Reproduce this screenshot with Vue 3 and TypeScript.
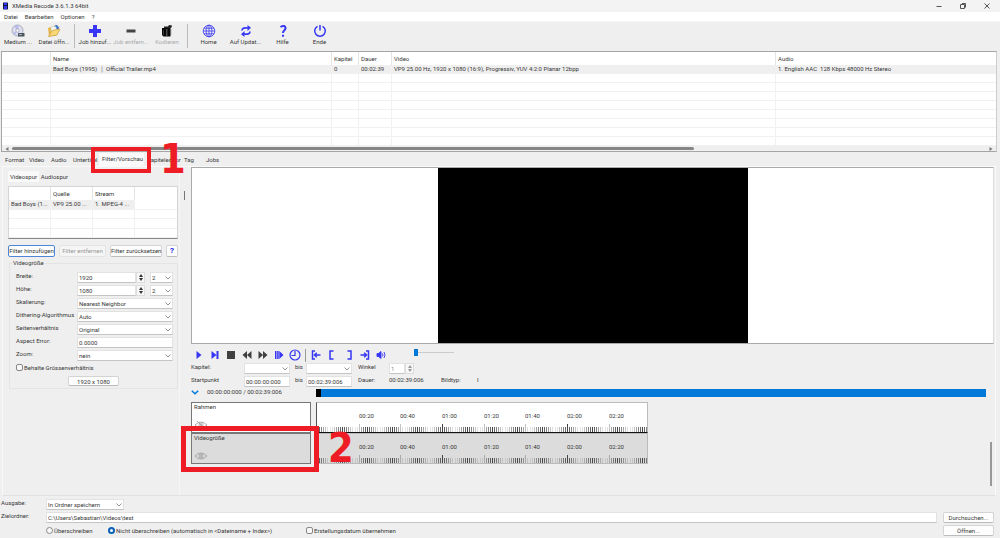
<script setup lang="ts">
import { ref } from 'vue'

interface Tool { label: string; icon: string; disabled?: boolean }

const menus: string[] = ['Datei', 'Bearbeiten', 'Optionen', '?']
const toolGroups: Tool[][] = [
  [{ label: 'Medium ...', icon: 'disc' }, { label: 'Datei öffn...', icon: 'folder' }],
  [
    { label: 'Job hinzuf...', icon: 'plus' },
    { label: 'Job entfern...', icon: 'minus', disabled: true },
    { label: 'Kodieren', icon: 'encode', disabled: true },
  ],
  [
    { label: 'Home', icon: 'globe' },
    { label: 'Auf Updat...', icon: 'update' },
    { label: 'Hilfe', icon: 'help' },
    { label: 'Ende', icon: 'power' },
  ],
]
const tabs: string[] = ['Format', 'Video', 'Audio', 'Untertitel', 'Filter/Vorschau', 'Kapiteleditor', 'Tag', 'Jobs']
const activeTab = ref('Filter/Vorschau')
const emptyRows = 8
const playerIcons: string[] = ['play', 'next', 'stop', 'rewind', 'forward', 'step', 'clock']
const markIcons: string[] = ['gostart', 'markin', 'markout', 'goend', 'sound']

const width = ref('1920')
const height = ref('1080')
const aspect = ref('0.0000')
const start = ref('00:00:00:000')
const end = ref('00:02:39:006')
const angle = ref('1')
const target = ref('C:\\Users\\Sebastian\\Videos\\test')
const overwrite = ref('no')
const volume = ref(0)
const selects = [
  { id: 'scale', label: 'Skalierung:', value: 'Nearest Neighbor' },
  { id: 'dither', label: 'Dithering-Algorithmus', value: 'Auto' },
  { id: 'ratio', label: 'Seitenverhältnis', value: 'Original' },
]

const step = 125 / 60
const ticks = Array.from({ length: 159 }, (_, i) => {
  const x = i * step
  const snapped = Math.round(x)
  return { x: snapped, major: i > 0 && i % 20 === 0, opacity: Math.max(0.14, 1 - 2 * Math.abs(x - snapped)) }
})
const marks = ['00:20', '00:40', '01:00', '01:20', '01:40', '02:00', '02:20'].map((text, i) => ({
  text,
  x: Math.round((i + 1) * step * 20),
}))
const tracks = [
  { name: 'Rahmen', hidden: true, selected: false },
  { name: 'Videogröße', hidden: false, selected: true },
]
</script>

<template>
  <div class="app">
    <header class="title">
      <svg class="logo" viewBox="0 0 6 8"><rect width="6" height="8" fill="#111" /><rect x="1" width="4" height="3" fill="#3038f0" /><rect x="1" y="4" width="4" height="4" fill="#3038f0" /></svg>
      <span class="caption">XMedia Recode 3.6.1.3 64bit</span>
      <button class="win" aria-label="Minimieren"><svg viewBox="0 0 8 8"><path d="M1.500 4.500h5" /></svg></button>
      <button class="win" aria-label="Wiederherstellen"><svg viewBox="0 0 8 8"><path d="M1.500 2.500h4v4h-4zM3 1.500h3.500v4" /></svg></button>
      <button class="win" aria-label="Schließen"><svg viewBox="0 0 8 8"><path d="M1.500 1.500l5 5m0-5l-5 5" /></svg></button>
    </header>
    <nav class="menu"><button v-for="m in menus" :key="m">{{ m }}</button></nav>

    <div class="toolbar">
      <div v-for="(group, gi) in toolGroups" :key="gi" class="group" :class="'g' + gi">
        <button v-for="t in group" :key="t.label" class="tool" :disabled="t.disabled">
          <svg viewBox="0 0 14 14">
            <template v-if="t.icon === 'disc'">
              <circle cx="6.500" cy="6.500" r="5.500" fill="#dedff0" stroke="#9a9cac" stroke-width=".8" />
              <path d="M6.500 6.500L3 2.500A5 5 0 0 1 8 1.500zM6.500 6.500L4 11a5 5 0 0 1-2-2z" fill="#b9bce8" />
              <circle cx="6.500" cy="6.500" r="1.600" fill="#fff" stroke="#8a8c9c" stroke-width=".6" />
              <rect x="7" y="9" width="6.500" height="3.500" rx=".5" fill="#4a5560" /><path d="M8 10.500h3" stroke="#cdd" stroke-width=".7" />
            </template>
            <template v-else-if="t.icon === 'folder'">
              <path d="M1 4l3-1 1 1 5-1v8l-8 1.500z" fill="#e9b848" />
              <path d="M4 3l5-2 3 3-3 5-5-1z" fill="#f7f7ee" stroke="#b8b8a0" stroke-width=".4" />
              <path d="M1.500 12.500L5 6.500l8-1.500-3 6z" fill="#f8d878" stroke="#c08d28" stroke-width=".6" />
              <path d="M7 3c2-3 4-2 4 0l1.500-.5L11 5.500 8.500 4l1-.5c0-1-1-1.500-2.500-.5z" fill="#386fc0" />
            </template>
            <path v-else-if="t.icon === 'plus'" d="M5 1h4v4h4v4H9v4H5V9H1V5h4z" fill="#3636f4" />
            <rect v-else-if="t.icon === 'minus'" x="2.500" y="5.500" width="9" height="3" fill="#444" />
            <template v-else-if="t.icon === 'encode'">
              <path d="M2 4h8.500v8.500H3.500L2 11z" fill="#080808" /><path d="M4 4V2.500h4L9 1l3 .5-.5 2-1 .5z" fill="#222" />
              <path d="M6.800 5v7" stroke="#999" stroke-width=".7" /><path d="M3.500 6v5M10.800 5v6" stroke="#555" stroke-width=".6" />
            </template>
            <g v-else-if="t.icon === 'globe'" fill="none" stroke="#4747f2" stroke-width=".9">
              <circle cx="7" cy="7" r="5.800" /><ellipse cx="7" cy="7" rx="2.900" ry="5.800" /><path d="M7 1.200v11.600M1.200 7h11.600M2 4.200h10M2 9.800h10" />
            </g>
            <g v-else-if="t.icon === 'update'" fill="none" stroke="#3636f4" stroke-width="1.700">
              <path d="M3 6.500C3 4 5.500 3.500 9 4M11 7.500c0 2.500-2.500 3-6 2.500" /><path d="M8.500 1v6L12 3.800zM5.500 7v6L2 10.200z" fill="#3636f4" stroke="none" />
            </g>
            <g v-else-if="t.icon === 'help'" fill="none" stroke="#3636f4" stroke-width="2">
              <path d="M4.500 3.200C6 1.400 10 1.500 9.500 4.500 9.200 6.300 7 6.300 7 9" /><path d="M7 10.800v2" />
            </g>
            <g v-else fill="none" stroke="#3636f4" stroke-width="1.500"><path d="M4.500 2.300a5.300 5.300 0 1 0 5 0M7 1v5.500" /></g>
          </svg>
          <span>{{ t.label }}</span>
        </button>
      </div>
    </div>

    <section class="files">
      <table class="list jobs">
        <colgroup><col class="c0" /><col class="c1" /><col class="c2" /><col class="c3" /><col class="c4" /><col /></colgroup>
        <thead><tr><th></th><th>Name</th><th>Kapitel</th><th>Dauer</th><th>Video</th><th>Audio</th></tr></thead>
        <tbody>
          <tr class="sel">
            <td></td><td>Bad Boys (1995) ｜ Official Trailer.mp4</td><td>0</td><td>00:02:39</td>
            <td>VP9 25.00 Hz, 1920 x 1080 (16:9), Progressiv, YUV 4:2:0 Planar 12bpp</td>
            <td>1. English AAC&nbsp; 128 Kbps 48000 Hz Stereo</td>
          </tr>
          <tr v-for="r in emptyRows" :key="r"><td v-for="c in 6" :key="c"></td></tr>
        </tbody>
      </table>
      <div class="hscroll">
        <svg viewBox="0 0 4 4"><path d="M3.500 0v4L.5 2z" fill="#777" /></svg>
        <div class="rail"><div class="thumb"></div></div>
        <svg viewBox="0 0 4 4"><path d="M.5 0v4l3-2z" fill="#777" /></svg>
      </div>
    </section>

    <nav class="tabs">
      <div v-for="t in tabs" :key="t" class="tabwrap" :class="{ on: t === activeTab }">
        <button class="tab" @click="activeTab = t">{{ t }}</button>
        <template v-if="t === 'Filter/Vorschau'"><span class="frame"></span><span class="digit one">1</span></template>
      </div>
    </nav>

    <main class="panel">
      <aside class="left">
        <div class="subtabs"><button class="on">Videospur</button><button>Audiospur</button></div>
        <table class="list streams">
          <colgroup><col class="s" /><col class="s" /><col class="s" /><col /></colgroup>
          <thead><tr><th></th><th>Quelle</th><th>Stream</th><th></th></tr></thead>
          <tbody>
            <tr class="sel"><td>Bad Boys (1...</td><td>VP9 25.00 ...</td><td>1. MPEG-4 ...</td><td class="clear"></td></tr>
            <tr v-for="r in 3" :key="r"><td v-for="c in 4" :key="c"></td></tr>
          </tbody>
        </table>
        <div class="actions">
          <button class="btn primary b1">Filter hinzufügen</button>
          <button class="btn b1" disabled>Filter entfernen</button>
          <button class="btn b2">Filter zurücksetzen</button>
          <button class="btn b3">?</button>
        </div>
        <fieldset class="size">
          <legend>Videogröße</legend>
          <div class="row">
            <label for="w">Breite:</label>
            <span class="spin"><input id="w" v-model="width" /><span class="ud"><button aria-label="Mehr"><svg viewBox="0 0 4 3"><path d="M0 3h4L2 0z" /></svg></button><button aria-label="Weniger"><svg viewBox="0 0 4 3"><path d="M0 0h4L2 3z" /></svg></button></span></span>
            <span class="combo mini"><select aria-label="Breite Teiler"><option>2</option></select><svg viewBox="0 0 6 4"><path d="M.5.5L3 3 5.500.5" /></svg></span>
          </div>
          <div class="row">
            <label for="h">Höhe:</label>
            <span class="spin"><input id="h" v-model="height" /><span class="ud"><button aria-label="Mehr"><svg viewBox="0 0 4 3"><path d="M0 3h4L2 0z" /></svg></button><button aria-label="Weniger"><svg viewBox="0 0 4 3"><path d="M0 0h4L2 3z" /></svg></button></span></span>
            <span class="combo mini"><select aria-label="Höhe Teiler"><option>2</option></select><svg viewBox="0 0 6 4"><path d="M.5.5L3 3 5.500.5" /></svg></span>
          </div>
          <div v-for="s in selects" :key="s.id" class="row">
            <label :for="s.id">{{ s.label }}</label>
            <span class="combo"><select :id="s.id"><option>{{ s.value }}</option></select><svg viewBox="0 0 6 4"><path d="M.5.5L3 3 5.500.5" /></svg></span>
          </div>
          <div class="row"><label for="ae">Aspect Error:</label><input id="ae" v-model="aspect" class="grow" /></div>
          <div class="row"><label for="zoom">Zoom:</label><span class="combo"><select id="zoom"><option>nein</option></select><svg viewBox="0 0 6 4"><path d="M.5.5L3 3 5.500.5" /></svg></span></div>
          <label class="check"><input type="checkbox" />Behalte Grössenverhältnis</label>
          <button class="btn res">1920 x 1080</button>
        </fieldset>
      </aside>
      <div class="splitter"></div>

      <section class="right">
        <div class="preview"><div class="screen"></div></div>
        <div class="player">
          <button v-for="p in playerIcons" :key="p" class="pi" :aria-label="p">
            <svg viewBox="0 0 12 12" fill="#3636f4">
              <path v-if="p === 'play'" d="M3.500 2v8l5-4z" />
              <path v-else-if="p === 'next'" d="M2.500 2v8l5-4zM7.500 2h2v8h-2z" />
              <rect v-else-if="p === 'stop'" x="2" y="2" width="8" height="8" fill="#404040" />
              <path v-else-if="p === 'rewind'" d="M6 2v8L1.500 6zM10.500 2v8L6 6z" fill="#404040" />
              <path v-else-if="p === 'forward'" d="M1.500 2v8L6 6zM6 2v8l4.500-4z" fill="#404040" />
              <path v-else-if="p === 'step'" d="M2 2h1.500v8H2zM4.200 2h1.500v8H4.200zM6.300 2v8l4.200-4z" />
              <g v-else fill="none" stroke="#3636f4" stroke-width="1.200"><circle cx="6" cy="6" r="5" /><path d="M6 2v4.500H2.500" /></g>
            </svg>
          </button>
          <span class="vsep"></span>
          <button v-for="p in markIcons" :key="p" class="pi" :class="p" :aria-label="p">
            <svg viewBox="0 0 12 12" fill="none" stroke="#3636f4" stroke-width="1.500">
              <path v-if="p === 'gostart'" d="M5 2H2.500v8H5M5 6h5.500M6.800 3.800L4.500 6l2.300 2.200" />
              <path v-else-if="p === 'markin'" d="M7.500 2H4v8h3.500" />
              <path v-else-if="p === 'markout'" d="M4.500 2H8v8H4.500" />
              <path v-else-if="p === 'goend'" d="M7 2h2.500v8H7M1.500 6H7M5.200 3.800L7.500 6 5.200 8.200" />
              <g v-else stroke-width=".9"><path d="M2 4.500h1.500L6 2.500v7L3.500 7.500H2z" fill="#3636f4" /><path d="M7.500 4.500q1 1.500 0 3M9 3q2 3 0 6" /></g>
            </svg>
          </button>
          <input v-model="volume" class="volume" type="range" min="0" max="100" aria-label="Lautstärke" />
        </div>

        <div class="times">
          <label for="k1">Kapitel:</label>
          <span class="combo"><select id="k1"><option></option></select><svg viewBox="0 0 6 4"><path d="M.5.5L3 3 5.500.5" /></svg></span>
          <label for="k2" class="to">bis</label>
          <span class="combo"><select id="k2"><option></option></select><svg viewBox="0 0 6 4"><path d="M.5.5L3 3 5.500.5" /></svg></span>
          <label for="win" class="info">Winkel</label>
          <span class="spin dim"><input id="win" v-model="angle" /><span class="ud"><button aria-label="Mehr"><svg viewBox="0 0 4 3"><path d="M0 3h4L2 0z" /></svg></button><button aria-label="Weniger"><svg viewBox="0 0 4 3"><path d="M0 0h4L2 3z" /></svg></button></span></span>
          <span></span><span></span>
          <label for="t1">Startpunkt</label><input id="t1" v-model="start" />
          <label for="t2" class="to">bis</label><input id="t2" v-model="end" />
          <span class="info">Dauer:</span><span>00:02:39:006</span><span class="kind">Bildtyp:</span><span class="frametype">I</span>
        </div>

        <div class="timeline">
          <div class="pos">
            <button class="fold" aria-label="Einklappen"><svg viewBox="0 0 8 5"><path d="M.8.8L4 3.800 7.200.8" /></svg></button>
            <span>00:00:00:000 / 00:02:39:006</span>
          </div>
          <div class="bar"><div class="cursor"></div></div>
        </div>
        <div class="tracks">
          <div v-for="t in tracks" :key="t.name" class="track" :class="{ picked: t.selected }">
            <div class="name">
              <span>{{ t.name }}</span>
              <svg viewBox="0 0 14 8"><path d="M1 4Q7-2 13 4 7 10 1 4z" /><circle cx="7" cy="4" r="2" /><circle cx="7" cy="4" r=".6" /><path v-if="t.hidden" d="M3 0l8 8" /></svg>
            </div>
            <svg class="ruler" viewBox="0 0 330 29">
              <rect v-for="(k, i) in ticks" :key="i" :x="k.x" :y="k.major ? 21 : 24" width="1" :height="k.major ? 8 : 5" :opacity="k.opacity" />
              <text v-for="m in marks" :key="m.text" :x="m.x" y="15">{{ m.text }}</text>
            </svg>
            <template v-if="t.selected"><span class="frame"></span><span class="digit two">2</span></template>
          </div>
        </div>
        <div class="vthumb"></div>
      </section>
    </main>

    <footer class="output">
      <label for="out">Ausgabe:</label>
      <span class="combo outsel"><select id="out"><option>In Ordner speichern</option></select><svg viewBox="0 0 6 4"><path d="M.5.5L3 3 5.500.5" /></svg></span>
      <span></span>
      <label for="dir">Zielordner:</label>
      <input id="dir" v-model="target" />
      <button class="btn">Durchsuchen...</button>
      <span></span>
      <div class="opts">
        <label class="check o1"><input v-model="overwrite" type="radio" value="yes" />Überschreiben</label>
        <label class="check o2"><input v-model="overwrite" type="radio" value="no" />Nicht überschreiben (automatisch in &lt;Dateiname + Index&gt;)</label>
        <label class="check"><input type="checkbox" />Erstellungsdatum übernehmen</label>
      </div>
      <button class="btn">Öffnen...</button>
    </footer>
  </div>
</template>

<style>
body { margin: 0; }
</style>

<style scoped>
* { box-sizing: border-box; }
.app { min-height: 100vh; display: flex; flex-direction: column; background: #efefef; color: #383838; font: 6px/8px Roboto, sans-serif; overflow: hidden; }
button, input, select { font: inherit; color: inherit; margin: 0; padding: 0; border: 0; border-radius: 0; background: none; appearance: none; }
button, label, span { white-space: nowrap; }
svg { display: block; flex: none; }

.title { height: 12px; background: #f3f3f3; display: flex; align-items: center; padding: 0 1px 0 3px; }
.logo { width: 5px; height: 8px; }
.caption { margin-left: 4px; flex: 1; }
.win { width: 24px; height: 12px; display: flex; align-items: center; justify-content: center; }
.win svg { width: 8px; height: 8px; fill: none; stroke: #555; stroke-width: 1; }
.menu { height: 10px; background: #fff; display: flex; gap: 7px; padding-left: 4px; border-bottom: 1px solid #f6f6f6; }

.toolbar { height: 29px; display: flex; padding-top: 2px; }
.group { display: flex; }
.g1, .g2 { border-left: 1px solid #bbb; padding-left: 2px; height: 24px; }
.g1 { margin-left: 2px; }
.g2 { margin-left: 2px; }
.tool { width: 36px; display: flex; flex-direction: column; align-items: center; }
.g2 .tool { width: 37px; }
.tool svg { width: 14px; height: 14px; }
.tool span { line-height: 8px; }
.tool:disabled span { color: #aaa; }

.files { height: 101px; margin: 0 3px 0 1px; background: #fff; border: 1px solid #a5a5a5; border-right: 1px solid #ccc; display: flex; flex-direction: column; }
.list { border-collapse: separate; border-spacing: 0; table-layout: fixed; width: 100%; }
.list th { height: 13px; text-align: left; font-weight: 400; padding: 0 2px; border-right: 1px solid #e4e4e4; line-height: 8px; }
.list td { height: 9px; padding: 0 2px; line-height: 8px; border-right: 1px solid #f1f1f1; border-bottom: 1px solid #f1f1f1; white-space: nowrap; overflow: hidden; }
.list th:last-child, .list td:last-child { border-right: 0; }
.list .sel td { background: #efefef; }
.list .sel .clear { background: #fff; }
.jobs { height: 90px; overflow: hidden; }
.c0 { width: 49px; }
.c1 { width: 281px; }
.c2 { width: 27px; }
.c3 { width: 33px; }
.c4 { width: 384px; }
.hscroll { flex: 1; background: #efefef; display: flex; align-items: center; padding: 0 3px; gap: 3px; z-index: 1; }
.hscroll svg { width: 4px; height: 4px; }
.rail { flex: 1; }
.thumb { height: 3px; width: 70%; border-radius: 2px; background: #868686; }

.tabs { height: 14px; display: flex; padding-left: 2px; align-items: flex-end; }
.tabwrap { position: relative; height: 12px; }
.tab { height: 12px; padding: 0 3px; }
.tabwrap:nth-child(1) { width: 24px; }
.tabwrap:nth-child(2) { width: 22px; }
.tabwrap:nth-child(3) { width: 22px; }
.tabwrap:nth-child(4) { width: 29px; }
.tabwrap:nth-child(5) { width: 45px; }
.tabwrap:nth-child(6) { width: 37px; }
.tabwrap:nth-child(7) { width: 22px; }
.tabwrap.on { background: #f9f9f9; height: 13px; }
.frame { position: absolute; border: 5px solid #ee1c24; z-index: 3; }
.tabwrap .frame { left: -8px; top: -6px; width: 60px; height: 26px; border-width: 4px; }
.digit { position: absolute; color: #ee1c24; font: bold 41px/30px "DejaVu Sans Condensed", "DejaVu Sans", sans-serif; z-index: 3; }
.one { left: 61px; top: -9px; }

.panel { flex: 1; margin: 0 4px 0 2px; border: 1px solid #f9f9f9; border-bottom-color: #e0e0e0; display: flex; }
.left { width: 177px; flex: none; padding: 4px 0 0 5px; border-right: 1px solid #f6f6f6; }
.subtabs { display: flex; height: 12px; }
.subtabs button { width: 31px; height: 12px; }
.subtabs .on { background: #f9f9f9; height: 11px; }
.streams { background: #fff; border: 1px solid #d5d5d5; border-bottom-color: #888; width: 170px; margin-top: 3px; height: 53px; }
.s { width: 42px; }
.actions { display: flex; gap: 4px; margin-top: 6px; }
.btn { height: 12px; background: #fdfdfd; border: 1px solid #d4d4d4; border-bottom-color: #bbb; border-radius: 2px; text-align: center; line-height: 8px; }
.btn:disabled { background: #f5f5f5; border-color: #e4e4e4; color: #999; }
.primary { border-color: #4d86d8; }
.b1 { width: 47px; }
.b2 { width: 52px; }
.b3 { width: 12px; color: #2525f0; font-weight: 700; font-size: 8px; }
.size { border: 1px solid #e4e4e4; margin: 2px 0 0 1px; padding: 5px 4px 2px 6px; width: 169px; min-width: 0; }
.size legend { margin-left: -4px; padding: 0 1px; line-height: 8px; }
.row { display: flex; height: 13px; }
.row label { width: 61px; flex: none; line-height: 8px; }
.grow { flex: 1; }
input, select { height: 11px; background: #fff; border: 1px solid #e2e2e2; border-bottom-color: #c4c4c4; min-width: 0; padding: 0 1px; line-height: 8px; }
.combo { position: relative; flex: 1; min-width: 0; height: 11px; display: block; }
.combo select { width: 100%; display: block; }
.combo svg { position: absolute; right: 2px; top: 4px; width: 6px; height: 4px; fill: none; stroke: #777; stroke-width: .8; pointer-events: none; }
.mini { flex: none; width: 23px; margin-left: 5px; }
.spin { display: flex; flex: 1; min-width: 0; height: 11px; }
.spin input { flex: 1; }
.ud { width: 9px; flex: none; display: flex; flex-direction: column; justify-content: center; gap: 1px; align-items: center; background: #f7f7f7; border: 1px solid #ddd; }
.ud button { display: block; }
.ud svg { width: 4px; height: 3px; fill: #333; }
.dim .ud svg { fill: #999; }
.dim input { color: #888; }
.check { display: flex; align-items: center; gap: 1px; height: 9px; }
.check input { width: 7px; height: 7px; border: 1px solid #888; border-radius: 2px; background: #f8f8f8; padding: 0; }
.check input[type='radio'] { border-radius: 50%; }
.check input[type='radio']:checked { border: 2px solid #0a5fb8; background: #fff; }
.res { width: 51px; height: 10px; margin: 4px 0 0 52px; display: block; line-height: 7px; }

.splitter { width: 9px; flex: none; padding: 24px 0 0 4px; }
.splitter::before { content: ''; display: block; width: 1px; height: 9px; background: #777; }
.right { flex: 1; min-width: 0; position: relative; display: flex; flex-direction: column; padding-left: 2px; }
.preview { height: 177px; background: #fff; border: 1px solid #aaa; border-right-color: #ddd; display: flex; justify-content: center; margin-right: 1px; }
.screen { width: 310px; background: #000; }
.player { display: flex; align-items: center; height: 18px; padding: 4px 0 0; }
.pi { width: 16px; height: 12px; display: flex; justify-content: center; }
.pi svg { width: 12px; height: 12px; }
.vsep { width: 1px; height: 13px; background: #999; margin: 0 2px; }
.markin { margin-right: 1px; }
.volume { width: 40px; height: 10px; margin: -6px 0 0 25px; border: 0; padding: 0; background: linear-gradient(#ccc, #ccc) 0 5px / 100% 1px no-repeat; }
.volume::-webkit-slider-thumb { appearance: none; width: 4px; height: 7px; background: #0078d7; }
.times { display: grid; grid-template-columns: 53px 46px 16px 46px 37px 25px 51px auto; row-gap: 2px; margin-top: 1px; align-items: start; justify-content: start; line-height: 8px; }
.to { padding-left: 5px; }
.info { padding-left: 6px; }
.kind { padding-left: 27px; }
.frametype { padding-left: 12px; }
.timeline { display: flex; height: 10px; margin: 1px 9px 4px 0; align-items: center; }
.pos { width: 125px; display: flex; align-items: center; gap: 8px; height: 10px; padding-bottom: 2px; }
.fold svg { width: 8px; height: 5px; fill: none; stroke: #0078d7; stroke-width: 1.5; }
.bar { flex: 1; height: 8px; background: #0078d7; }
.cursor { width: 5px; height: 8px; background: #000; }
.track { position: relative; display: flex; gap: 5px; }
.name { width: 120px; height: 31px; border: 1px solid #777; background: #fff; padding: 0 2px 3px; display: flex; flex-direction: column; justify-content: space-between; }
.name svg { width: 14px; height: 8px; fill: none; stroke: #999; stroke-width: .8; }
.ruler { width: 332px; height: 31px; border: 1px solid #bbb; background: #fff; }
.ruler rect { fill: #444; }
.ruler text { font-size: 6px; fill: #383838; }
.track:first-child .ruler { border-bottom-color: #111; border-left-color: #555; }
.picked .name, .picked .ruler { background: #dcdcdc; }
.picked .frame { left: -10px; top: -7px; width: 138px; height: 46px; }
.two { left: 137px; top: 0; }
.vthumb { position: absolute; right: 3px; bottom: 9px; width: 2px; height: 44px; background: #999; }

.output { display: grid; grid-template-columns: 45px 1fr 51px; column-gap: 0; row-gap: 2px; padding: 3px 6px 2px 1px; align-items: center; }
.output > .btn { height: 11px; width: 51px; line-height: 8px; }
.output #dir { margin-right: 6px; }
.output > label { padding-bottom: 3px; }
.outsel { width: 78px; }
.opts { display: flex; }
.o1 { width: 62px; }
.o2 { width: 198px; }
</style>
